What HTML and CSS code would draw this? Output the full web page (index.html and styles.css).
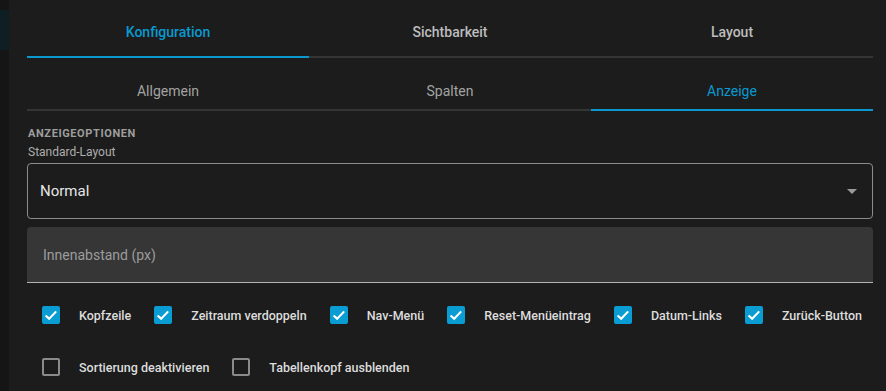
FILE: index.html
```html
<!DOCTYPE html>
<html lang="de">
<head>
    <meta charset="UTF-8">
    <meta name="viewport" content="width=device-width, initial-scale=1.0">
    <title>Tabellen-Karte Editor</title>
    <link rel="stylesheet" href="styles.css">
</head>
<body>
    <div class="app">
        <aside class="sidebar">
            <div class="sidebar-active"></div>
        </aside>

        <main class="panel">
            <nav class="tabs tabs-main">
                <div class="tab active">Konfiguration</div>
                <div class="tab">Sichtbarkeit</div>
                <div class="tab">Layout</div>
            </nav>

            <nav class="tabs tabs-sub">
                <div class="tab">Allgemein</div>
                <div class="tab">Spalten</div>
                <div class="tab active">Anzeige</div>
            </nav>

            <section class="options">
                <h3 class="section-title">Anzeigeoptionen</h3>
                <div class="field-label">Standard-Layout</div>

                <div class="select">
                    <span class="select-value">Normal</span>
                    <svg class="select-arrow" width="10" height="5" viewBox="0 0 10 5">
                        <path d="M0 0 L10 0 L5 5 Z" fill="#9a9a9a"/>
                    </svg>
                </div>

                <div class="textfield">
                    <span class="placeholder">Innenabstand (px)</span>
                </div>

                <div class="checks">
                    <label class="check"><span class="box checked"><svg viewBox="0 0 18 18"><path d="M3.6 9.4 L7.2 12.8 L14.2 5.4"/></svg></span>Kopfzeile</label>
                    <label class="check"><span class="box checked"><svg viewBox="0 0 18 18"><path d="M3.6 9.4 L7.2 12.8 L14.2 5.4"/></svg></span>Zeitraum verdoppeln</label>
                    <label class="check"><span class="box checked"><svg viewBox="0 0 18 18"><path d="M3.6 9.4 L7.2 12.8 L14.2 5.4"/></svg></span>Nav-Menü</label>
                    <label class="check"><span class="box checked"><svg viewBox="0 0 18 18"><path d="M3.6 9.4 L7.2 12.8 L14.2 5.4"/></svg></span>Reset-Menüeintrag</label>
                    <label class="check"><span class="box checked"><svg viewBox="0 0 18 18"><path d="M3.6 9.4 L7.2 12.8 L14.2 5.4"/></svg></span>Datum-Links</label>
                    <label class="check"><span class="box checked"><svg viewBox="0 0 18 18"><path d="M3.6 9.4 L7.2 12.8 L14.2 5.4"/></svg></span>Zurück-Button</label>
                </div>
                <div class="checks">
                    <label class="check"><span class="box"></span>Sortierung deaktivieren</label>
                    <label class="check"><span class="box"></span>Tabellenkopf ausblenden</label>
                </div>
            </section>
        </main>
    </div>
</body>
</html>
```

FILE: styles.css
```css
body {
    margin: 0;
    background: #161616;
    font-family: Roboto, 'Noto Sans', sans-serif;
    overflow: hidden;
}

.app {
    display: flex;
    height: 391px;
}

.sidebar {
    width: 9px;
    flex-shrink: 0;
    background: #151515;
}
.sidebar-active {
    margin-top: 10px;
    height: 40px;
    background: #0f1e23;
}

.panel {
    flex: 1;
    min-width: 0;
    background: #1c1c1c;
    padding: 8px 13px 0 18px;
}

/* tabs */
.tabs {
    display: flex;
}
.tab {
    flex: 1;
    text-align: center;
    font-size: 14px;
    line-height: 20px;
    border-bottom: 2px solid #353535;
}
.tabs-main .tab {
    padding: 14px 0;
    font-weight: 500;
    color: #bdbdbd;
}
.tabs-sub .tab {
    padding: 23px 0 8px;
    color: #a3a3a3;
}
.tab.active {
    color: #0a99cf;
    border-bottom-color: #0a99cf;
}

/* options */
.section-title {
    margin: 16px 0 0 1px;
    font-size: 11px;
    line-height: 13px;
    font-weight: 700;
    letter-spacing: 0.6px;
    text-transform: uppercase;
    color: #9e9e9e;
}
.field-label {
    margin: 4px 0 0 1px;
    font-size: 12px;
    line-height: 16px;
    color: #adadad;
}

.select {
    box-sizing: border-box;
    height: 56px;
    margin-top: 3px;
    border: 1px solid #8c8c8c;
    border-radius: 4px;
    display: flex;
    align-items: center;
    justify-content: space-between;
    padding: 0 15px 0 12px;
}
.select-value {
    font-size: 15px;
    color: #e6e6e6;
}
.select-arrow {
    display: block;
}

.textfield {
    box-sizing: border-box;
    height: 56px;
    margin-top: 8px;
    background: #363636;
    border-radius: 4px 4px 0 0;
    border-bottom: 1px solid #b4b4b4;
    display: flex;
    align-items: center;
    padding-left: 16px;
}
.placeholder {
    font-size: 14px;
    color: #9c9c9c;
}

.checks {
    display: flex;
    gap: 23px;
    padding-left: 15px;
    margin-top: 23px;
}
.checks + .checks {
    margin-top: 34px;
}
.check {
    display: flex;
    align-items: center;
    height: 18px;
    font-size: 12.5px;
    font-weight: 500;
    color: #dcdcdc;
    white-space: nowrap;
}
.box {
    box-sizing: border-box;
    width: 18px;
    height: 18px;
    margin-right: 19px;
    border: 2px solid #8a8a8a;
    border-radius: 2px;
}
.box.checked {
    border: none;
    background: #0a9dd3;
}
.box svg {
    display: block;
    width: 18px;
    height: 18px;
}
.box svg path {
    fill: none;
    stroke: #ffffff;
    stroke-width: 2.1;
}
```
